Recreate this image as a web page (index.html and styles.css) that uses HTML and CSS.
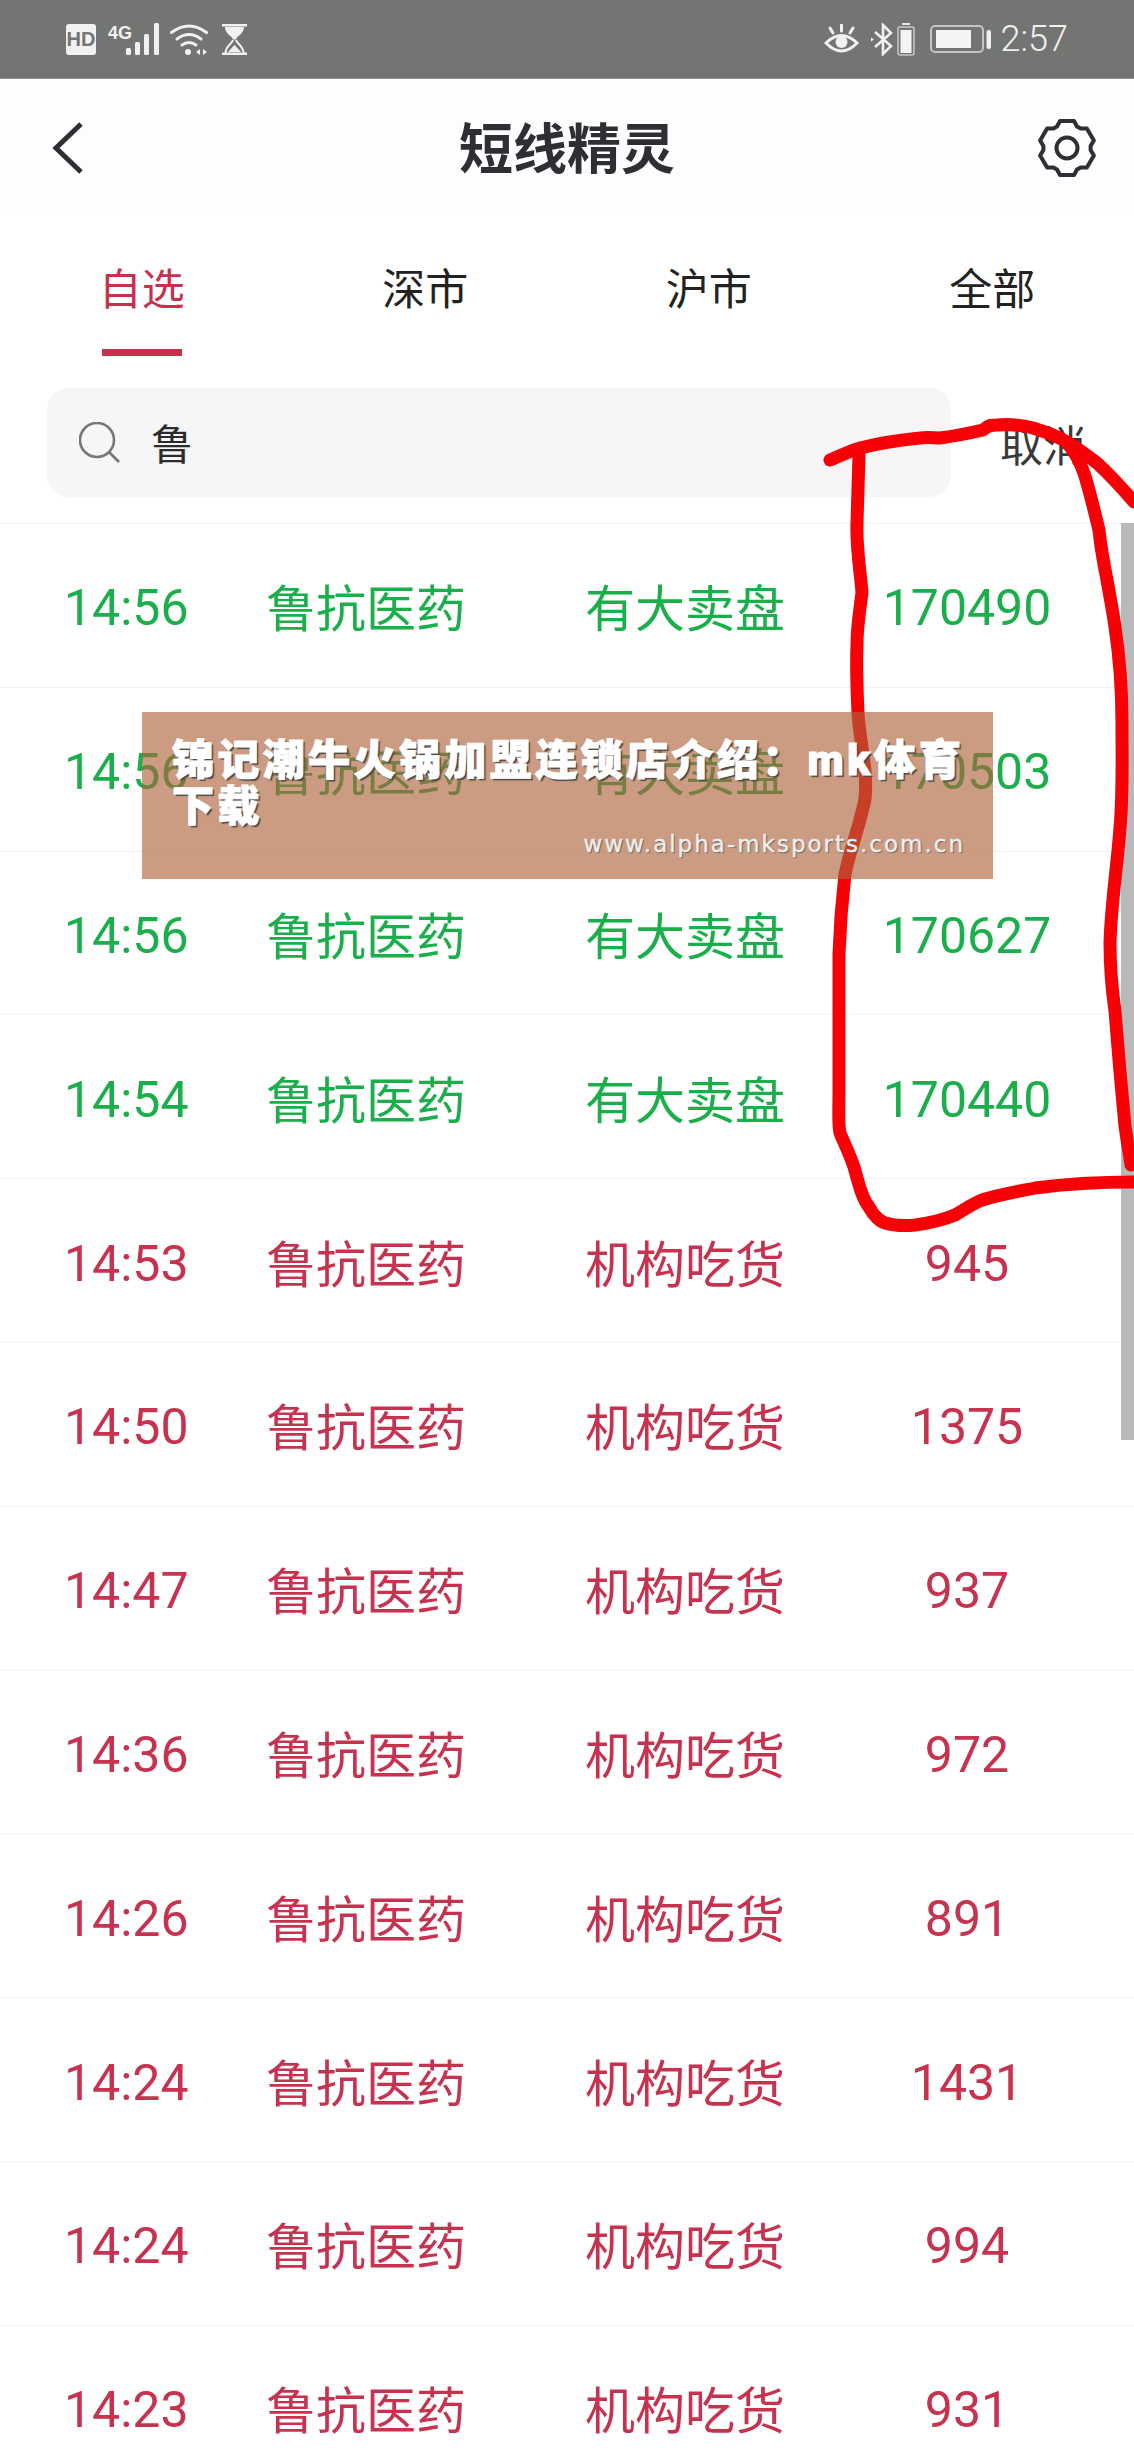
FILE: index.html
```html
<!DOCTYPE html>
<html lang="zh-CN">
<head>
<meta charset="utf-8">
<title>短线精灵</title>
<link rel="stylesheet" href="styles.css">
</head>
<body>
<div class="page">
  <div class="status">
    <div class="status-group">
      <span class="hd">HD</span>
      <span class="net">4G</span>
      <svg class="ic-bars" viewBox="0 0 34 32" width="34" height="32"><g fill="#f1f1f1"><rect x="0" y="25" width="5" height="7" rx="1.5"/><rect x="9" y="19" width="5" height="13" rx="1.5"/><rect x="18" y="11" width="5" height="21" rx="1.5"/><rect x="28" y="0" width="5" height="32" rx="1.5"/></g></svg>
      <svg class="ic-wifi" viewBox="0 0 38 32" width="38" height="32"><g fill="none" stroke="#f1f1f1" stroke-width="3" stroke-linecap="round"><path d="M1.500 9.500Q19 -3.500 36.500 9.500"/><path d="M7 16Q19 7 31 16"/><path d="M12 22Q19 17 26 22"/></g><g fill="#f1f1f1"><circle cx="18" cy="29" r="3"/><path d="M30 26v6l-4-3zM33 26v6l4-3z"/></g></svg>
      <svg class="ic-glass" viewBox="0 0 25 31" width="25" height="31"><g fill="#f1f1f1"><rect width="25" height="2.500"/><rect y="28.500" width="25" height="2.500"/><path d="M3 3H22C22 10 15 11.500 14 15.500H11C10 11.500 3 10 3 3Z"/><path d="M6 28L12.500 21L19 28Z"/></g><path d="M11 16C10 20 3.500 22 3.500 29M14 16C15 20 21.500 22 21.500 29" fill="none" stroke="#f1f1f1" stroke-width="2"/></svg>
    </div>
    <div class="status-group">
      <svg class="ic-eye" viewBox="0 0 35 30" width="35" height="30"><g fill="none" stroke="#f1f1f1" stroke-width="3" stroke-linecap="round"><path d="M2 19Q17.500 4 33 19Q17.500 35 2 19Z"/><path d="M17.500 1V7M6 4L9 9M29 4L26 9"/></g><circle cx="17.500" cy="18" r="6" fill="#f1f1f1"/></svg>
      <svg class="ic-bt" viewBox="0 0 24 33" width="24" height="33"><path d="M4 9L20 23L12 31V2L20 10L4 24" fill="none" stroke="#f1f1f1" stroke-width="2.600"/><path d="M0 14.500l3 2-3 2z" fill="#f1f1f1"/></svg>
      <svg class="ic-bat-s" viewBox="0 0 18 33" width="18" height="33"><rect x="5" y="0" width="8" height="2" fill="#e6e6e6"/><rect x="1" y="4" width="16" height="28" rx="2" fill="none" stroke="#c8c8c8" stroke-width="1.500"/><rect x="3.500" y="7" width="11" height="23" fill="#f3f3f3"/></svg>
      <svg class="ic-bat" viewBox="0 0 61 28" width="61" height="28"><rect x="1" y="1" width="52" height="26" rx="4" fill="none" stroke="#c4c4c4" stroke-width="2"/><rect x="6" y="5" width="35" height="18" fill="#f3f3f3"/><rect x="56.500" y="5" width="4.500" height="19" rx="2" fill="#f1f1f1"/></svg>
      <span class="clock">2:57</span>
    </div>
  </div>

  <header class="topbar">
    <svg class="ic-back" viewBox="0 0 32 54" width="32" height="54"><path d="M29 3L4 27L29 51" fill="none" stroke="#2f2e32" stroke-width="5"/></svg>
    <h1 class="title">短线精灵</h1>
    <svg class="ic-gear" viewBox="0 0 60 60" width="60" height="60"><g transform="translate(30 30)" fill="none" stroke="#2f2e32" stroke-width="4" stroke-linejoin="round"><path d="M-10 -21.500L-7 -27L7 -27L10 -21.500L13.620 -19.410L19.880 -19.560L26.880 -7.440L23.620 -2.090L23.620 2.090L26.880 7.440L19.880 19.560L13.620 19.410L10 21.500L7 27L-7 27L-10 21.500L-13.620 19.410L-19.880 19.560L-26.880 7.440L-23.620 2.090L-23.620 -2.090L-26.880 -7.440L-19.880 -19.560L-13.620 -19.410Z"/><circle r="10.500"/></g></svg>
  </header>

  <nav class="tabs">
    <div class="tab tab-active">自选</div>
    <div class="tab">深市</div>
    <div class="tab">沪市</div>
    <div class="tab">全部</div>
  </nav>

  <div class="searchrow">
    <div class="searchbox">
      <svg class="ic-search" viewBox="0 0 41 41" width="41" height="41"><g fill="none" stroke="#777" stroke-width="2.600"><circle cx="18" cy="18" r="17"/><path d="M30 30L40 40"/></g></svg>
      <span class="query">鲁</span>
    </div>
    <span class="cancel">取消</span>
  </div>

  <div class="list">
    <div class="row up"><span class="num">14:56</span><span>鲁抗医药</span><span>有大卖盘</span><span class="num vol">170490</span></div>
    <div class="row up"><span class="num">14:56</span><span>鲁抗医药</span><span>有大卖盘</span><span class="num vol">170503</span></div>
    <div class="row up"><span class="num">14:56</span><span>鲁抗医药</span><span>有大卖盘</span><span class="num vol">170627</span></div>
    <div class="row up"><span class="num">14:54</span><span>鲁抗医药</span><span>有大卖盘</span><span class="num vol">170440</span></div>
    <div class="row"><span class="num">14:53</span><span>鲁抗医药</span><span>机构吃货</span><span class="num vol">945</span></div>
    <div class="row"><span class="num">14:50</span><span>鲁抗医药</span><span>机构吃货</span><span class="num vol">1375</span></div>
    <div class="row"><span class="num">14:47</span><span>鲁抗医药</span><span>机构吃货</span><span class="num vol">937</span></div>
    <div class="row"><span class="num">14:36</span><span>鲁抗医药</span><span>机构吃货</span><span class="num vol">972</span></div>
    <div class="row"><span class="num">14:26</span><span>鲁抗医药</span><span>机构吃货</span><span class="num vol">891</span></div>
    <div class="row"><span class="num">14:24</span><span>鲁抗医药</span><span>机构吃货</span><span class="num vol">1431</span></div>
    <div class="row"><span class="num">14:24</span><span>鲁抗医药</span><span>机构吃货</span><span class="num vol">994</span></div>
    <div class="row"><span class="num">14:23</span><span>鲁抗医药</span><span>机构吃货</span><span class="num vol">931</span></div>
  </div>

  <div class="scrollbar"></div>

  <svg class="scribble" viewBox="0 0 1134 2457" width="1134" height="2457"><g fill="none" stroke="#f70006" stroke-width="13" stroke-linecap="round" stroke-linejoin="round"><path d="M830 460C840 456 850 451 860 448C880 443 900 440 920 438C928 437 934 438 940 438C955 436 970 433 983 430C988 425 992 425 997 425C1010 424 1022 425 1033 428C1046 432 1057 436 1067 442C1079 449 1088 456 1097 463C1110 475 1122 488 1134 502"/><path d="M859 455L857 523C856 545 860 570 862 592C860 610 857 625 857 644C856 670 857 690 858 713C860 745 868 770 865 799C860 825 850 850 845 874C842 900 840 925 839 954L839 1093C839 1110 838 1125 840 1133C845 1145 850 1155 854 1167C859 1185 862 1198 869 1207C874 1216 879 1221 885 1223C895 1226 905 1226 915 1225C930 1223 943 1220 955 1215C964 1210 972 1204 982 1200C997 1195 1015 1192 1035 1188C1065 1184 1100 1182 1134 1182"/><path d="M1067 443C1075 452 1080 462 1084 473C1090 492 1094 510 1099 530C1101 550 1104 565 1107 580C1110 597 1113 612 1115 627C1120 660 1122 690 1122 724C1122 760 1123 795 1120 828C1117 868 1111 905 1110 943C1110 965 1112 990 1115 1011C1118 1050 1122 1095 1125 1126C1127 1140 1129 1152 1131 1165"/></g></svg>

  <div class="banner">
    <div class="banner-title">锦记潮牛火锅加盟连锁店介绍：mk体育下载</div>
    <div class="banner-url">www.alpha-mksports.com.cn</div>
  </div>
</div>
</body>
</html>
```
FILE: styles.css
```css
* {
  box-sizing: border-box;
}

html,
body {
  margin: 0;
  padding: 0;
  height: 100%;
  overflow: hidden;
  background: #fff;
}

.page {
  position: relative;
  width: 1134px;
  height: 2457px;
  overflow: hidden;
  font-family: Roboto, "Noto Sans CJK SC", sans-serif;
}

/* status bar */
.status {
  display: flex;
  justify-content: space-between;
  align-items: center;
  height: 79px;
  padding: 0 66px;
  background: #737572;
  border-bottom: 1px solid #8f918d;
  color: #f1f1f1;
}

.status-group {
  display: flex;
  align-items: center;
}

.hd {
  display: flex;
  align-items: center;
  justify-content: center;
  width: 30px;
  height: 31px;
  border-radius: 3px;
  background: #f1f1f1;
  color: #737572;
  font: 700 20px "Liberation Sans Narrow", "Liberation Sans", sans-serif;
}

.net {
  align-self: flex-start;
  margin: 1px 0 0 12px;
  width: 18px;
  font: 700 18px/18px "Liberation Sans Narrow", "Liberation Sans", sans-serif;
}

.ic-bars {
  display: block;
}

.ic-wifi {
  display: block;
  margin-left: 10px;
}

.ic-glass {
  display: block;
  margin-left: 14px;
}

.ic-eye {
  display: block;
}

.ic-bt {
  display: block;
  margin-left: 12px;
}

.ic-bat-s {
  display: block;
  margin-left: 2px;
}

.ic-bat {
  display: block;
  margin-left: 15px;
}

.clock {
  margin-left: 10px;
  font-size: 36px;
  font-weight: 300;
  line-height: 40px;
}

/* header */
.topbar {
  display: grid;
  grid-template-columns: 1fr auto 1fr;
  align-items: center;
  height: 137px;
  padding: 0 37px;
  background: #fdfcfe;
}

.ic-back,
.ic-gear {
  display: block;
}

.ic-back {
  margin-left: 15px;
}

.ic-gear {
  justify-self: end;
}

.title {
  margin: 0;
  padding-top: 7px;
  font-size: 54px;
  font-weight: 700;
  line-height: 70px;
  color: #2f2e32;
}

/* tabs */
.tabs {
  display: grid;
  grid-template-columns: repeat(4, 1fr);
  height: 140px;
  padding-top: 44px;
}

.tab {
  position: relative;
  text-align: center;
  font-size: 43px;
  line-height: 60px;
  color: #222;
}

.tab-active {
  color: #c9304e;
}

.tab-active::after {
  content: "";
  position: absolute;
  left: 102px;
  bottom: 0;
  width: 80px;
  height: 7px;
  background: #c9304e;
}

/* search */
.searchrow {
  display: flex;
  align-items: center;
  height: 109px;
  margin-top: 32px;
  padding-left: 47px;
}

.searchbox {
  display: flex;
  align-items: center;
  width: 904px;
  height: 109px;
  padding-left: 32px;
  border-radius: 22px;
  background: #f6f6f6;
}

.ic-search {
  display: block;
}

.query {
  margin: 0 0 3px 31px;
  font-size: 42px;
  color: #2b2b2b;
}

.cancel {
  margin-left: 49px;
  font-size: 43px;
  color: #3a3a3a;
}

/* rows */
.list {
  margin-top: 26px;
  border-top: 1px solid #efefef;
}

.row {
  display: grid;
  grid-template-columns: 202px 319px 260px 244px;
  align-items: center;
  height: 163.8px;
  padding-left: 64px;
  border-bottom: 1px solid #f0f0f0;
  font-size: 50px;
  color: #c7324f;
}

.up {
  color: #1aaf4b;
}

.num {
  padding-top: 6px;
}

.vol {
  text-align: center;
}

.scrollbar {
  position: absolute;
  top: 523px;
  right: 0;
  width: 13px;
  height: 917px;
  background: #b9b9b9;
}

.scribble {
  position: absolute;
  top: 0;
  left: 0;
}

/* watermark banner */
.banner {
  position: absolute;
  top: 712px;
  left: 142px;
  display: flex;
  flex-direction: column;
  justify-content: space-between;
  width: 851px;
  height: 167px;
  padding: 26px 28px 23px 30px;
  background: rgba(174, 98, 60, 0.64);
}

.banner-title {
  font-size: 42px;
  font-weight: 900;
  line-height: 46px;
  letter-spacing: 3.4px;
  color: #fff;
  -webkit-text-stroke: 1px #fff;
  text-shadow: 2px 2px 1px #4a4a4a;
}

.banner-url {
  text-align: right;
  font-family: "DejaVu Sans", sans-serif;
  font-size: 23px;
  line-height: 28px;
  letter-spacing: 2px;
  color: #eee;
  -webkit-text-stroke: 0.4px #eee;
  text-shadow: 1px 1px 1px #555;
}
```
